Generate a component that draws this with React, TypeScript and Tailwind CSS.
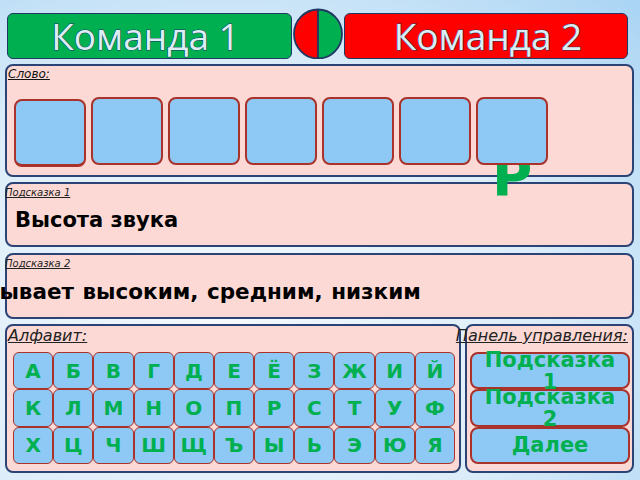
import React from "react";

const rows = [
  ["А", "Б", "В", "Г", "Д", "Е", "Ё", "З", "Ж", "И", "Й"],
  ["К", "Л", "М", "Н", "О", "П", "Р", "С", "Т", "У", "Ф"],
  ["Х", "Ц", "Ч", "Ш", "Щ", "Ъ", "Ы", "Ь", "Э", "Ю", "Я"],
];

const dv = "font-['DejaVu_Sans',sans-serif]";

function Tile({ extra = "" }: { extra?: string }) {
  return (
    <div
      className={`w-[72px] h-[68px] rounded-[8px] border-2 border-[#a9322a] bg-[#8ec9f5] ${extra}`}
    />
  );
}

export default function App() {
  return (
    <div
      className={`relative w-[640px] h-[480px] overflow-hidden ${dv} bg-[radial-gradient(ellipse_at_35%_65%,#f4f9fe_0%,#dcedf9_55%,#a9d4f4_100%)]`}
    >
      {/* Header */}
      <div className="flex items-end pt-[8px] pl-[7px]">
        <div className="w-[285px] h-[46px] rounded-[6px] border-[1.5px] border-[#1f3864] bg-[#00b050] flex items-center justify-center">
          <span className="font-['Open_Sans',sans-serif] text-[37px] leading-none text-[#dbeef4] [-webkit-text-stroke:1px_#1f3864] [paint-order:stroke_fill] -mt-[2px] -ml-[8px]">
            Команда 1
          </span>
        </div>
        <svg width="50" height="51" viewBox="0 0 50 51" className="mx-[1px]">
          <path d="M25 1.5 A24 24.5 0 0 0 25 50.5 Z" fill="#ff0000" />
          <path d="M25 1.5 A24 24.5 0 0 1 25 50.5 Z" fill="#00b050" />
          <ellipse cx="25" cy="26" rx="24" ry="24.5" fill="none" stroke="#1f3864" strokeWidth="1.8" />
          <line x1="25" y1="1.5" x2="25" y2="50.5" stroke="#1f3864" strokeWidth="1.8" />
        </svg>
        <div className="w-[284px] h-[46px] rounded-[6px] border-[1.5px] border-[#1f3864] bg-[#ff0000] flex items-center justify-center">
          <span className="font-['Open_Sans',sans-serif] text-[37px] leading-none text-[#dbeef4] [-webkit-text-stroke:1px_#1f3864] [paint-order:stroke_fill] -mt-[2px] ml-[4px]">
            Команда 2
          </span>
        </div>
      </div>

      {/* Word panel */}
      <div className="ml-[5px] mt-[5px] w-[629px] h-[113px] rounded-[8px] border-2 border-[#2b4475] bg-[#fcd9d4]">
        <div className="pl-[1px] pt-[1px] text-[12px] leading-[15px] italic underline text-[#111]">Слово:</div>
        <div className="flex items-start gap-[5px] pl-[7px] mt-[15px]">
          <Tile extra="mt-[2px] border-b-[3px]" />
          <Tile />
          <Tile />
          <Tile />
          <Tile />
          <Tile />
          <Tile extra="relative z-20" />
        </div>
      </div>

      {/* Hint 1 */}
      <div className="ml-[5px] mt-[5px] w-[629px] h-[65px] rounded-[8px] border-2 border-[#2b4475] bg-[#fcd9d4]">
        <div className="-ml-[2px] pt-[2px] text-[10px] leading-[14px] italic underline text-[#222]">Подсказка 1</div>
        <div className="mt-[9px] pl-[8px] text-[21px] leading-[22px] font-bold text-black">Высота звука</div>
      </div>

      {/* Hint 2 */}
      <div className="ml-[5px] mt-[6px] w-[629px] h-[66px] rounded-[8px] border-2 border-[#2b4475] bg-[#fcd9d4]">
        <div className="-ml-[2px] pt-[2px] text-[10px] leading-[14px] italic underline text-[#222]">Подсказка 2</div>
        <div className="mt-[10px] -ml-[24px] text-[21.5px] leading-[22px] font-bold text-black whitespace-nowrap [word-spacing:1px]">
          Бывает высоким, средним, низким
        </div>
      </div>

      {/* Bottom row */}
      <div className="flex gap-[4px] ml-[5px] mt-[5px]">
        <div className="w-[456px] h-[149px] rounded-[8px] border-2 border-[#2b4475] bg-[#fcd9d4]">
          <div className="pl-[1px] pt-[1px] text-[16px] leading-[18px] italic underline text-[#222]">Алфавит:</div>
          <div className="mt-[7px] ml-[6px] w-[442px] h-[112px] grid grid-cols-11 grid-rows-3">
            {rows.flat().map((l, i) => (
              <div
                key={i}
                className="rounded-[6px] border-[1.5px] border-[#a9322a] bg-[#8ec9f5] flex items-center justify-center text-[20px] font-bold text-[#00b050]"
              >
                {l}
              </div>
            ))}
          </div>
        </div>
        <div className="w-[169px] h-[149px] rounded-[8px] border-2 border-[#2b4475] bg-[#fcd9d4]">
          <div className="pr-[4px] pt-[1px] text-right text-[16px] leading-[18px] italic underline text-[#222] whitespace-nowrap -ml-[20px]">
            Панель управления:
          </div>
          <div className="mt-[7px] ml-[3px] w-[160px] h-[112px] grid grid-rows-3">
            <div className="rounded-[8px] border-2 border-[#a9322a] bg-[#8ec9f5] flex items-center justify-center text-center text-[21px] leading-[22px] font-bold text-[#00b050] relative z-10">
              <span>Подсказка<br />1</span>
            </div>
            <div className="rounded-[8px] border-2 border-[#a9322a] bg-[#8ec9f5] flex items-center justify-center text-center text-[21px] leading-[22px] font-bold text-[#00b050]">
              <span>Подсказка<br />2</span>
            </div>
            <div className="rounded-[8px] border-2 border-[#a9322a] bg-[#8ec9f5] flex items-center justify-center text-center text-[21px] leading-[22px] font-bold text-[#00b050]">
              Далее
            </div>
          </div>
        </div>
      </div>

      {/* Falling letter */}
      <span className="absolute z-10 left-[492px] top-[149px] text-[55px] leading-none font-bold text-[#00b050]">
        Р
      </span>
    </div>
  );
}
